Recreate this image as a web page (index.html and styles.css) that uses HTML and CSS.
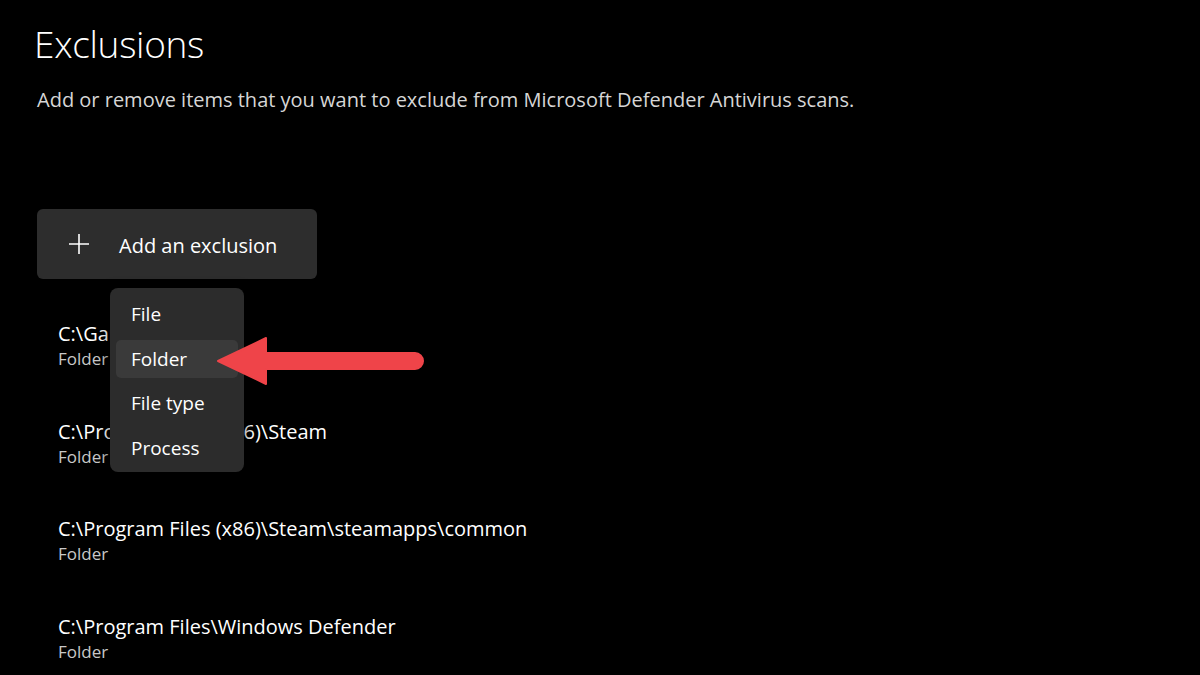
FILE: index.html
```html
<!DOCTYPE html>
<html lang="en">
<head>
<meta charset="utf-8">
<title>Exclusions</title>
<link rel="stylesheet" href="styles.css">
</head>
<body>
<main class="page">
  <h1 class="title">Exclusions</h1>
  <p class="desc">Add or remove items that you want to exclude from Microsoft Defender Antivirus scans.</p>
  <div class="add-wrap">
    <button class="add-btn">
      <svg class="plus" width="22" height="22" viewBox="0 0 22 22"><path d="M11 1v20M1 11h20" stroke="#fff" stroke-width="1.6" fill="none"/></svg>
      <span>Add an exclusion</span>
    </button>
    <div class="menu">
      <div class="menu-item">File</div>
      <div class="menu-item active">Folder</div>
      <div class="menu-item">File type</div>
      <div class="menu-item">Process</div>
    </div>
    <svg class="arrow" width="212" height="50" viewBox="0 0 212 50">
      <path d="M2 25 L50 2 L50 17 L199 17 A8 8 0 0 1 199 33 L50 33 L50 48 Z" fill="#ef4449" stroke="#ef4449" stroke-width="2" stroke-linejoin="round"/>
    </svg>
  </div>
  <ul class="list">
    <li class="item"><div class="path">C:\Games</div><div class="type">Folder</div></li>
    <li class="item"><div class="path">C:\Program Files (x86)\Steam</div><div class="type">Folder</div></li>
    <li class="item"><div class="path">C:\Program Files (x86)\Steam\steamapps\common</div><div class="type">Folder</div></li>
    <li class="item last"><div class="path">C:\Program Files\Windows Defender</div><div class="type">Folder</div></li>
  </ul>
</main>
</body>
</html>
```
FILE: styles.css
```css
html, body {
  margin: 0;
  padding: 0;
  background: #000;
}
body {
  width: 1200px;
  height: 675px;
  overflow: hidden;
  color: #fff;
  font-family: "Open Sans", "Noto Sans", sans-serif;
}
.page {
  padding: 18px 0 0 37px;
}
.title {
  margin: 0 0 0 -3px;
  font-size: 37px;
  font-weight: 300;
  line-height: 52px;
  color: #fff;
  letter-spacing: -0.3px;
}
.desc {
  margin: 16px 0 0 0;
  font-size: 20px;
  line-height: 28px;
  color: #d6d6d6;
}
.add-wrap {
  position: relative;
  margin-top: 95px;
}
.add-btn {
  display: flex;
  align-items: center;
  gap: 29px;
  width: 280px;
  height: 70px;
  padding: 2px 0 0 31px;
  background: #2d2d2d;
  border: none;
  border-radius: 6px;
  color: #fff;
  font-family: inherit;
  font-size: 20px;
  text-align: left;
}
.plus { flex: none; margin-top: -2px; }
.menu {
  position: absolute;
  left: 73px;
  top: 79px;
  width: 134px;
  padding: 7px 6px 5px;
  box-sizing: border-box;
  display: flex;
  flex-direction: column;
  gap: 6.5px;
  background: #2c2c2c;
  border-radius: 8px;
  box-shadow: 0 4px 14px rgba(0,0,0,0.6);
  z-index: 2;
}
.menu-item {
  height: 38px;
  padding-left: 15px;
  display: flex;
  align-items: center;
  font-size: 19px;
  color: #fff;
  border-radius: 5px;
}
.menu-item.active {
  background: #3a3a3a;
}
.arrow {
  position: absolute;
  left: 179px;
  top: 127px;
  z-index: 3;
}
.list {
  list-style: none;
  margin: 41px 0 0 0;
  padding: 0 0 0 21px;
}
.item {
  height: 97.7px;
}
.item.last {
  height: auto;
}
.path {
  font-size: 20px;
  line-height: 28px;
  color: #fff;
}
.type {
  font-size: 17px;
  line-height: 22px;
  color: #c8c8c8;
}
```
